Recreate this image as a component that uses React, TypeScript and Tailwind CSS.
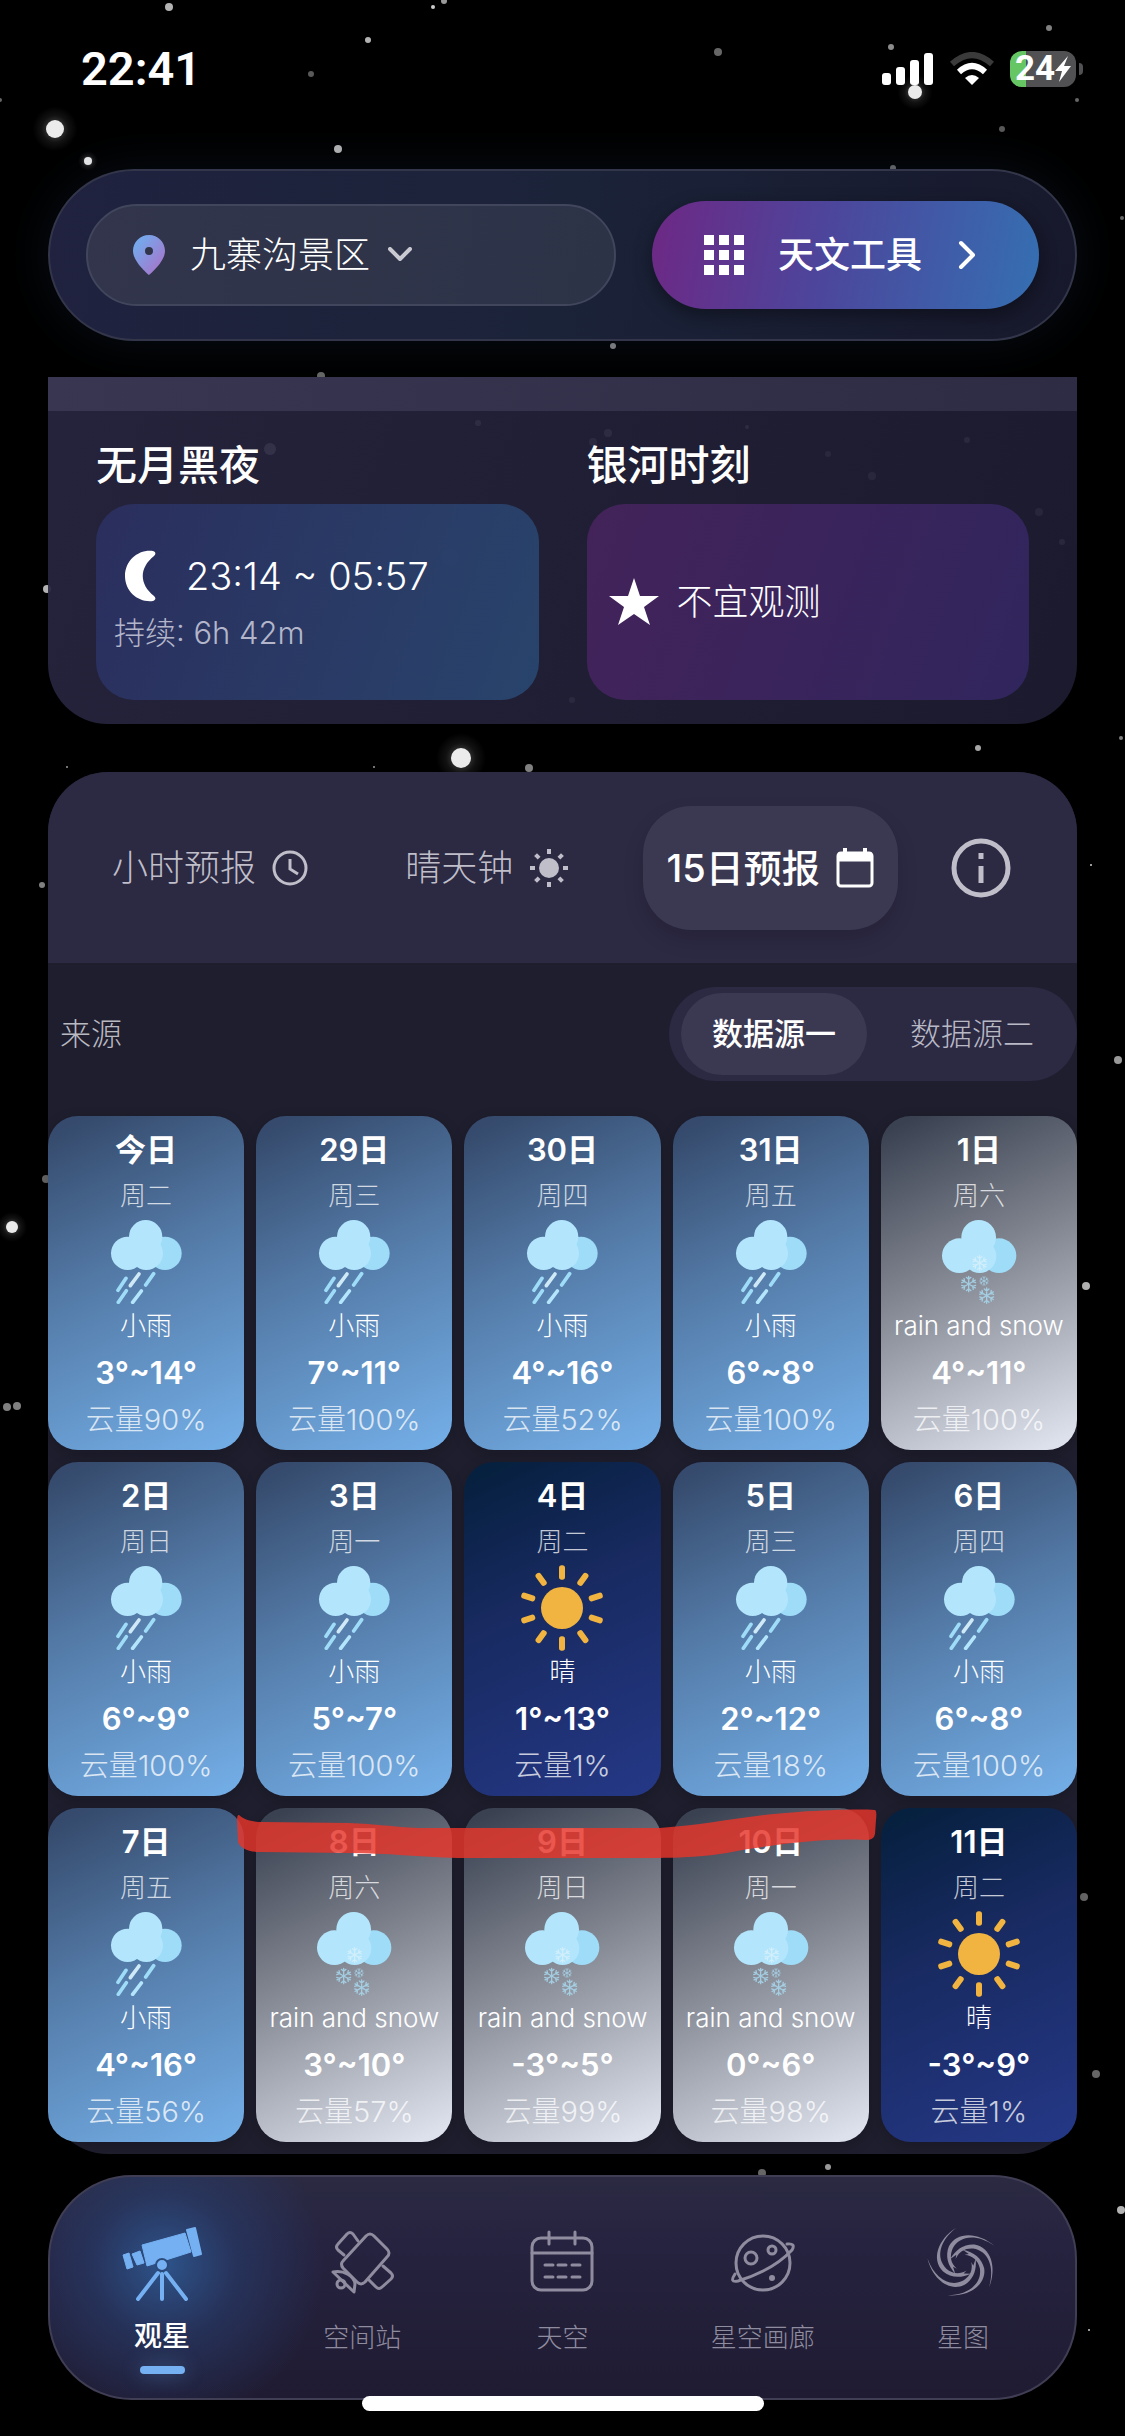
import React from "react";

type Sky = "rain" | "snow" | "sun";

interface Day {
  date: string;
  week: string;
  sky: Sky;
  temp: string;
  cloud: number;
}

const days: Day[] = [
  { date: "今日", week: "周二", sky: "rain", temp: "3°~14°", cloud: 90 },
  { date: "29日", week: "周三", sky: "rain", temp: "7°~11°", cloud: 100 },
  { date: "30日", week: "周四", sky: "rain", temp: "4°~16°", cloud: 52 },
  { date: "31日", week: "周五", sky: "rain", temp: "6°~8°", cloud: 100 },
  { date: "1日", week: "周六", sky: "snow", temp: "4°~11°", cloud: 100 },
  { date: "2日", week: "周日", sky: "rain", temp: "6°~9°", cloud: 100 },
  { date: "3日", week: "周一", sky: "rain", temp: "5°~7°", cloud: 100 },
  { date: "4日", week: "周二", sky: "sun", temp: "1°~13°", cloud: 1 },
  { date: "5日", week: "周三", sky: "rain", temp: "2°~12°", cloud: 18 },
  { date: "6日", week: "周四", sky: "rain", temp: "6°~8°", cloud: 100 },
  { date: "7日", week: "周五", sky: "rain", temp: "4°~16°", cloud: 56 },
  { date: "8日", week: "周六", sky: "snow", temp: "3°~10°", cloud: 57 },
  { date: "9日", week: "周日", sky: "snow", temp: "-3°~5°", cloud: 99 },
  { date: "10日", week: "周一", sky: "snow", temp: "0°~6°", cloud: 98 },
  { date: "11日", week: "周二", sky: "sun", temp: "-3°~9°", cloud: 1 },
];

const skyLabel: Record<Sky, string> = { rain: "小雨", snow: "rain and snow", sun: "晴" };

const skyBg: Record<Sky, string> = {
  rain: "bg-[linear-gradient(155deg,#354a6c_4%,#547ba8_45%,#72ace4_96%)]",
  snow: "bg-[linear-gradient(155deg,#3a4252_4%,#7d818c_42%,#dde1ec_96%)]",
  sun: "bg-[linear-gradient(155deg,#06203f_4%,#182a60_40%,#243784_96%)]",
};

// x, y, radius, opacity
const stars = [
  [169, 7, 4, 0.7], [433, 7, 2, 0.8], [444, 1, 3, 0.6], [368, 40, 3, 0.7], [311, 74, 3, 0.35],
  [718, 52, 4, 0.4], [891, 47, 3, 0.55], [1049, 28, 3, 0.5], [338, 149, 4, 0.7], [1002, 129, 3, 0.35],
  [1077, 100, 2, 0.4], [1122, 218, 2, 0.4], [613, 346, 3, 0.5], [321, 376, 4, 0.4], [893, 168, 3, 0.4],
  [0, 100, 2, 0.4], [47, 589, 4, 0.7], [978, 748, 3, 0.65], [1121, 738, 2, 0.5], [67, 767, 1, 0.6],
  [374, 767, 1, 0.6], [529, 768, 4, 0.5], [42, 885, 3, 0.5], [1091, 865, 1, 0.8], [1118, 1060, 4, 0.6],
  [46, 1179, 4, 0.4], [1086, 1286, 4, 0.7], [7, 1407, 4, 0.5], [17, 1406, 4, 0.5], [1084, 1897, 4, 0.4],
  [1096, 2074, 4, 0.4], [828, 2167, 3, 0.6], [762, 2173, 4, 0.4], [1121, 2210, 4, 0.7], [1089, 2330, 1, 0.8],
  [270, 449, 6, 0.9], [450, 557, 9, 0.9], [478, 423, 3, 0.7], [608, 433, 4, 0.7], [593, 442, 4, 0.6],
  [747, 427, 2, 0.8], [967, 440, 3, 0.7], [828, 454, 3, 0.6], [872, 476, 4, 0.6], [1039, 512, 4, 0.6],
  [1062, 542, 3, 0.7], [676, 578, 4, 0.6], [285, 611, 4, 0.6], [397, 652, 2, 0.7], [572, 700, 3, 0.6],
  [632, 674, 2, 0.7], [841, 642, 2, 0.7], [153, 614, 3, 0.5],
];

const brightStars = [
  [55, 129, 9], [88, 161, 4], [915, 92, 7], [461, 758, 10], [12, 1227, 6],
];

function StarField() {
  return (
    <svg
      aria-hidden="true"
      viewBox="0 0 1125 2436"
      preserveAspectRatio="xMidYMin slice"
      className="absolute inset-0 -z-10 h-full w-full"
    >
      <defs>
        <radialGradient id="glow">
          <stop offset="0.3" stopColor="#fff" stopOpacity="0.2" />
          <stop offset="0.6" stopColor="#fff" stopOpacity="0.07" />
          <stop offset="1" stopColor="#fff" stopOpacity="0" />
        </radialGradient>
      </defs>
      {stars.map(([x, y, r, o]) => (
        <circle key={`${x}-${y}`} cx={x} cy={y} r={r} fill="#fff" opacity={o} />
      ))}
      {brightStars.map(([x, y, r]) => (
        <g key={`${x}-${y}`}>
          <circle cx={x} cy={y} r={r * 2.5} fill="url(#glow)" />
          <circle cx={x} cy={y} r={r} fill="#ebebeb" />
        </g>
      ))}
    </svg>
  );
}

function RainIcon() {
  return (
    <svg viewBox="0 0 252 252" className="h-[84px] w-[84px]" aria-hidden="true">
      <circle cx="183" cy="100" r="50" fill="#9edcf8" />
      <circle cx="71" cy="100" r="50" fill="#b3e6fc" />
      <circle cx="125" cy="50" r="50" fill="#b3e6fc" />
      <circle cx="127" cy="100" r="50" fill="#b3e6fc" />
      <g strokeWidth="11" strokeLinecap="round">
        <path d="M66 175L42 211M149 161L125 195M67 212L43 247" stroke="#9edcf8" />
        <path d="M112 213L86 247" stroke="#b3e6fc" />
        <path d="M105 162L79 197" stroke="#cfeaf6" />
      </g>
    </svg>
  );
}

function Flake({ x, y, r }: { x: number; y: number; r: number }) {
  return (
    <g transform={`translate(${x} ${y}) scale(${r / 24})`}>
      {[0, 60, 120, 180, 240, 300].map((a) => (
        <path key={a} transform={`rotate(${a})`} d="M0 0V-23M-7 -20L0 -14L7 -20" />
      ))}
    </g>
  );
}

function SnowIcon() {
  return (
    <svg viewBox="0 0 252 252" className="h-[84px] w-[84px]" aria-hidden="true">
      <circle cx="186" cy="107" r="52" fill="#9edcf8" />
      <circle cx="67" cy="107" r="52" fill="#b3e6fc" />
      <circle cx="125" cy="52" r="52" fill="#b3e6fc" />
      <circle cx="128" cy="109" r="50" fill="#b3e6fc" />
      <g fill="none" stroke="#a8d8ee" strokeWidth="4" strokeLinecap="round" opacity="0.85">
        <g stroke="#d8f1fb">
          <Flake x={128} y={129} r={23} />
        </g>
        <Flake x={95} y={192} r={24} />
        <Flake x={141} y={183} r={14} />
        <Flake x={149} y={227} r={24} />
      </g>
    </svg>
  );
}

function SunIcon() {
  return (
    <svg viewBox="0 0 252 252" className="h-[84px] w-[84px] overflow-visible" aria-hidden="true">
      <circle cx="126" cy="126" r="63" fill="#f1b440" />
      {[0, 36, 72, 108, 144, 180, 216, 252, 288, 324].map((a) => (
        <rect key={a} x="117" y="-2" width="18" height="43" rx="8" fill="#f1b440" transform={`rotate(${a} 126 126)`} />
      ))}
    </svg>
  );
}

const skyIcon: Record<Sky, React.ReactNode> = { rain: <RainIcon />, snow: <SnowIcon />, sun: <SunIcon /> };

function StatusBar() {
  return (
    <div className="flex h-[169px] items-start justify-between pt-[42px] pr-[42px] pl-[81px]">
      <span className="font-[Roboto,sans-serif] text-[47px] leading-[54px] font-semibold">22:41</span>
      <div className="flex h-[54px] items-center gap-[15px]">
        <svg viewBox="0 0 52 34" className="h-[34px] w-[52px]" fill="#fff" aria-label="信号">
          <rect x="0" y="21" width="9" height="12" rx="3" />
          <rect x="14" y="15" width="9" height="18" rx="3" />
          <rect x="28" y="8" width="9" height="25" rx="3" />
          <rect x="42" y="1" width="9" height="32" rx="3" />
        </svg>
        <svg viewBox="0 0 46 34" className="h-[34px] w-[46px]" fill="none" strokeWidth="6" aria-label="无线网络">
          <path d="M3 12Q23 -6 43 12" stroke="#3a3a3a" />
          <path d="M10 20Q23 8 36 20" stroke="#fff" />
          <path d="M16 26Q23 20 30 26L23 33Z" fill="#fff" />
        </svg>
        <div className="flex items-center gap-[3px]">
          <div className="flex h-9 w-[66px] items-center justify-center rounded-xl bg-[linear-gradient(90deg,#66c664_24%,#515153_24%)]">
            <span className="font-[Roboto,sans-serif] text-[35px] leading-9 font-bold">24</span>
            <svg viewBox="0 0 16 26" className="h-[26px] w-4" fill="#fff" aria-hidden="true">
              <path d="M13 0L0 15H7L4 26L16 10H9Z" />
            </svg>
          </div>
          <span className="h-3 w-1 rounded-r-full bg-[#515153]" />
        </div>
      </div>
    </div>
  );
}

function Header() {
  return (
    <header className="flex items-center justify-between gap-9 rounded-full border-2 border-[#33364a] bg-[linear-gradient(100deg,#20223f_0%,#1b2339_50%,#17182b_100%)] px-9 py-[30px] shadow-[0_0_50px_rgba(40,70,110,0.2)]">
      <button
        type="button"
        className="flex h-[102px] flex-1 items-center rounded-full border-2 border-[#41465c] bg-[linear-gradient(100deg,#32354c,#2c3347)] pl-11"
      >
        <svg viewBox="0 0 34 40" className="h-10 w-[34px]" aria-hidden="true">
          <defs>
            <linearGradient id="pin" x1="0" y1="0" x2="1" y2="1">
              <stop offset="0.2" stopColor="#77a6ea" />
              <stop offset="0.85" stopColor="#a478cc" />
            </linearGradient>
          </defs>
          <path
            fill="url(#pin)"
            fillRule="evenodd"
            d="M17 0C8 0 1 7 1 16c0 11 16 24 16 24s16-13 16-24C33 7 26 0 17 0zm0 20a4 4 0 1 1 0-8 4 4 0 0 1 0 8z"
          />
        </svg>
        <span className="ml-6 text-[36px] leading-[54px] font-light">九寨沟景区</span>
        <svg viewBox="0 0 24 16" className="ml-[18px] h-4 w-6" fill="none" stroke="#c9cad2" strokeWidth="4" aria-hidden="true">
          <path d="M2 2L12 12L22 2" strokeLinecap="round" strokeLinejoin="round" />
        </svg>
      </button>
      <button
        type="button"
        className="flex h-[108px] items-center rounded-full bg-[linear-gradient(100deg,#6b2a86_3%,#4c469c_45%,#356fb2_100%)] pr-[63px] pl-[51px] shadow-[0_6px_18px_rgba(0,0,0,0.4)]"
      >
        <svg viewBox="0 0 42 42" className="h-[42px] w-[42px]" fill="#fff" aria-hidden="true">
          {[1, 16, 31].map((y) => [1, 16, 31].map((x) => <rect key={`${x}-${y}`} x={x} y={y} width="10" height="10" />))}
        </svg>
        <span className="ml-[33px] text-[36px] leading-[54px] font-medium">天文工具</span>
        <svg viewBox="0 0 18 30" className="ml-9 h-[30px] w-[18px]" fill="none" stroke="#fff" strokeWidth="4" aria-hidden="true">
          <path d="M3 3L15 15L3 27" strokeLinecap="round" strokeLinejoin="round" />
        </svg>
      </button>
    </header>
  );
}

function NightCard() {
  return (
    <section className="mt-9 overflow-hidden rounded-b-[60px] bg-[linear-gradient(110deg,rgba(40,38,64,0.93),rgba(29,28,49,0.93))]">
      <div className="h-[34px] bg-[linear-gradient(100deg,#393652,#2e2c44)]" />
      <div className="grid grid-cols-2 gap-12 px-12 pt-6 pb-6">
        <div>
          <h2 className="text-[41px] leading-[60px] font-medium">无月黑夜</h2>
          <div className="mt-[9px] flex h-[196px] flex-col justify-center rounded-[38px] bg-[linear-gradient(110deg,rgba(43,47,96,0.93),rgba(41,71,112,0.93))] pt-1 pl-[18px]">
            <div className="flex items-center">
              <svg viewBox="0 0 46 52" className="h-[52px] w-[52px]" fill="#fff" aria-hidden="true">
                <path d="M36 1C22 -1 8 10 8 26s14 27 28 25c3-1 3-3 1-5C22 34 22 18 37 6c2-2 2-4-1-5z" />
              </svg>
              <span className="ml-5 text-[38px] leading-[54px] font-light">23:14 ~ 05:57</span>
            </div>
            <p className="mt-1 text-[31px] leading-[52px] font-light text-[#b3b6cb]">持续: 6h 42m</p>
          </div>
        </div>
        <div>
          <h2 className="text-[41px] leading-[60px] font-medium">银河时刻</h2>
          <div className="mt-[9px] flex h-[196px] items-center rounded-[38px] bg-[linear-gradient(110deg,rgba(69,35,92,0.94),rgba(50,38,96,0.94))] pl-[22px]">
            <svg viewBox="0 0 50 48" className="h-12 w-[50px]" fill="#fff" aria-hidden="true">
              <path d="M25 0l6 18h19L35 29l6 18-16-11L9 47l6-18L0 18h19z" />
            </svg>
            <span className="ml-[18px] text-[36px] leading-[54px] font-light">不宜观测</span>
          </div>
        </div>
      </div>
    </section>
  );
}

function ForecastTabs() {
  return (
    <div className="flex h-[191px] items-center justify-between rounded-t-[60px] bg-[#2c2943] px-10 text-[36px] leading-[54px]">
      <button type="button" className="flex h-[124px] items-center gap-4 px-6 font-light text-[#bfbec9]">
        小时预报
        <svg viewBox="0 0 36 36" className="h-9 w-9" fill="none" stroke="currentColor" strokeWidth="3" aria-hidden="true">
          <circle cx="18" cy="18" r="16" />
          <path d="M18 9v10l8 5" />
        </svg>
      </button>
      <button type="button" className="flex h-[124px] items-center gap-4 px-6 font-light text-[#bfbec9]">
        晴天钟
        <svg viewBox="0 0 40 40" className="h-10 w-10" fill="currentColor" aria-hidden="true">
          <circle cx="20" cy="20" r="10" />
          {[0, 45, 90, 135, 180, 225, 270, 315].map((a) => (
            <rect key={a} x="18" y="1" width="4" height="5" transform={`rotate(${a} 20 20)`} />
          ))}
        </svg>
      </button>
      <button
        type="button"
        aria-pressed="true"
        className="flex h-[124px] items-center gap-4 rounded-[48px] bg-[#3b3852] px-6 text-[38px] font-medium shadow-[0_10px_20px_rgba(0,0,0,0.15)]"
      >
        15日预报
        <svg viewBox="0 0 38 40" className="h-10 w-[38px]" fill="none" stroke="#fff" strokeWidth="3" aria-hidden="true">
          <rect x="2" y="5" width="34" height="33" rx="3" />
          <path d="M2 9H36" strokeWidth="9" />
          <path d="M9 0V6M29 0V6" strokeWidth="4" />
        </svg>
      </button>
      <button type="button" aria-label="说明" className="flex h-[124px] items-center pr-[26px] pl-1">
        <svg viewBox="0 0 60 60" className="h-[60px] w-[60px]" fill="none" stroke="#bfbec9" strokeWidth="5" aria-hidden="true">
          <circle cx="30" cy="30" r="27" />
          <path d="M30 28V45M30 15V21" />
        </svg>
      </button>
    </div>
  );
}

function SourceRow() {
  return (
    <div className="flex items-center justify-between pt-6 pb-[35px] pl-3">
      <span className="text-[31px] leading-[46px] font-light text-[#b9b9c2]">来源</span>
      <div className="flex items-center gap-3 rounded-full bg-[#2c2943] px-3 py-1.5 text-[31px] leading-[46px]">
        <button type="button" aria-pressed="true" className="h-[82px] rounded-[41px] bg-[#3b3852] px-[31px] font-medium">
          数据源一
        </button>
        <button type="button" className="h-[82px] rounded-[41px] px-[31px] font-light text-[#b9b9c6]">
          数据源二
        </button>
      </div>
    </div>
  );
}

function DayCard({ date, week, sky, temp, cloud }: Day) {
  return (
    <li className={`flex flex-col items-center rounded-[30px] pt-3 pb-2 whitespace-nowrap shadow-[0_4px_14px_rgba(0,0,0,0.2)] ${skyBg[sky]}`}>
      <span className="text-[31px] leading-[44px] font-semibold">{date}</span>
      <span className="text-[26px] leading-[48px] font-light text-white/75">{week}</span>
      {skyIcon[sky]}
      <span className="text-[26px] leading-[44px] font-light">{skyLabel[sky]}</span>
      <span className="text-[31px] leading-[50px] font-semibold">{temp}</span>
      <span className="text-[29px] leading-[44px] font-light text-white/75">云量{cloud}%</span>
    </li>
  );
}

function Forecast() {
  return (
    <section className="mt-12 rounded-[60px] bg-[#1f1e2e] pb-3">
      <ForecastTabs />
      <SourceRow />
      <div className="relative">
        <ul className="grid grid-cols-5 gap-3">
          {days.map((d) => (
            <DayCard key={d.date} {...d} />
          ))}
        </ul>
        {/* marker stroke over the 8th to the 10th */}
        <svg
          aria-hidden="true"
          viewBox="0 0 1029 1026"
          preserveAspectRatio="none"
          className="pointer-events-none absolute inset-0 h-full w-full"
        >
          <path
            fill="#e6352a"
            opacity="0.83"
            d="M191 699C196 704 205 706 215 706L300 707C330 708 345 711 370 712L612 712C660 709 700 699 750 696C780 694 810 693 827 694Q829 695 828 704L827 718Q826 724 818 724C780 722 740 727 700 733C670 739 650 742 600 742H410C370 741 340 737 300 737L212 736C200 736 192 732 190 726L189 705Q189 698 191 699Z"
          />
        </svg>
      </div>
    </section>
  );
}

function TelescopeIcon() {
  return (
    <svg viewBox="0 0 80 80" className="h-20 w-20" fill="#74b0f2" stroke="#74b0f2" strokeLinejoin="round" aria-hidden="true">
      <path d="M65 4L73 2L79 28L72 30Z" strokeWidth="2" />
      <path d="M20 19L63 7L69 26L25 40Z" strokeWidth="1" />
      <path d="M10 28L18 25L22 37L15 39Z" />
      <path d="M1 29L7 27L11 41L5 43Z" />
      <circle cx="40" cy="39" r="6" stroke="#2c4b7c" strokeWidth="2" />
      <path d="M36 47L16 73M40 48V73M44 47L64 73" strokeWidth="4" strokeLinecap="round" />
    </svg>
  );
}

function StationIcon() {
  return (
    <>
      <path d="M36 6Q40 2 44 6L57 19Q61 23 57 27L35 52Q31 56 27 52L13 38Q10 34 13 31Z" />
      <path d="M28 11L23 4Q20 1 17 4L8 14Q5 17 8 20L14 25" />
      <path d="M53 36L61 43Q64 46 61 49L52 57Q49 60 46 57L39 50" />
      <path d="M3 42C14 40 24 46 25 54L24 62Z" />
      <circle cx="11" cy="54" r="4" />
    </>
  );
}

function SkyCalendarIcon() {
  return (
    <>
      <rect x="2" y="8" width="60" height="52" rx="9" />
      <path d="M2 23H62M19 2V14M45 2V14" />
      <path d="M15 35H23M28 35H36M42 35H50M15 47H23M28 47H36M42 47H50" />
    </>
  );
}

function PlanetIcon() {
  return (
    <>
      <circle cx="32" cy="33" r="27" />
      <circle cx="20" cy="28" r="6" />
      <circle cx="41" cy="20" r="4" />
      <circle cx="41" cy="48" r="3" fill="currentColor" stroke="none" />
      <path d="M4 44Q-2 53 7 51C30 44 48 34 61 20Q65 13 56 14" />
    </>
  );
}

function GalaxyIcon() {
  return (
    <g transform="translate(32 33) scale(0.32)" fill="currentColor" stroke="none">
      {[0, 72, 144, 216, 288].map((a) => (
        <path
          key={a}
          transform={`rotate(${a})`}
          d="M98 -54C45 -98 -20 -98 -44 -52C-56 -22 -48 8 -24 34L-31 12L-19 18C-39 0 -42 -22 -33 -44C-12 -86 42 -92 98 -54Z"
        />
      ))}
    </g>
  );
}

const navItems = [
  { label: "空间站", icon: <StationIcon /> },
  { label: "天空", icon: <SkyCalendarIcon /> },
  { label: "星空画廊", icon: <PlanetIcon /> },
  { label: "星图", icon: <GalaxyIcon /> },
];

function BottomNav() {
  return (
    <nav className="mt-[21px] grid h-[225px] grid-cols-5 rounded-[84px] border-2 border-[#403e54] bg-[radial-gradient(circle_160px_at_114px_88px,rgba(46,86,142,0.95),rgba(40,62,110,0.6)_45%,rgba(32,34,68,0)_100%),linear-gradient(180deg,#2b2a42_0%,#262340_30%,#1f1b32_100%)] px-3 pt-[49px]">
      <a href="#stargazing" aria-current="page" className="flex flex-col items-center">
        <TelescopeIcon />
        <span className="text-[28px] leading-[60px] font-medium">观星</span>
        <span className="h-2 w-[45px] rounded-full bg-[#74b0f2] shadow-[0_0_20px_rgba(116,176,242,0.4)]" />
      </a>
      {navItems.map(({ label, icon }) => (
        <a key={label} href={`#${label}`} className="flex flex-col items-center text-[#8f8c9f]">
          <svg
            viewBox="0 0 64 72"
            className="my-1 h-[72px] w-16 overflow-visible"
            fill="none"
            stroke="currentColor"
            strokeWidth="3"
            strokeLinecap="round"
            strokeLinejoin="round"
            aria-hidden="true"
          >
            {icon}
          </svg>
          <span className="text-[26px] leading-[64px] font-light">{label}</span>
        </a>
      ))}
    </nav>
  );
}

export default function App() {
  return (
    <div className="relative isolate min-h-screen overflow-hidden bg-black font-[Inter,'Noto_Sans_CJK_SC',sans-serif] text-white">
      <StarField />
      <StatusBar />
      <main className="px-12">
        <Header />
        <NightCard />
        <Forecast />
        <BottomNav />
      </main>
      <div className="relative mx-auto -mt-1 mb-6 h-[15px] w-[402px] rounded-full bg-white" />
    </div>
  );
}
